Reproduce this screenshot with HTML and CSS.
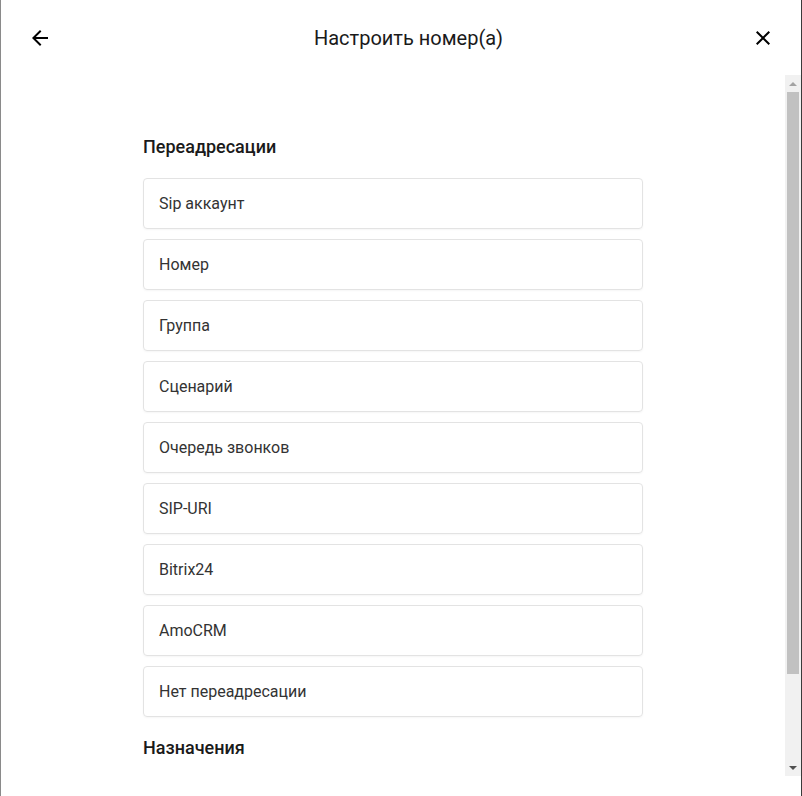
FILE: index.html
```html
<!DOCTYPE html>
<html lang="ru">
<head>
<meta charset="utf-8">
<title>Настроить номер(а)</title>
<link rel="stylesheet" href="styles.css">
</head>
<body>
<div class="modal">
  <header class="modal-header">
    <button class="icon-btn" aria-label="Назад">
      <svg viewBox="0 0 24 24" width="24" height="24"><path d="M20 11H7.830l5.59-5.59L12 4l-8 8 8 8 1.41-1.410L7.830 13H20v-2z"/></svg>
    </button>
    <h1 class="modal-title">Настроить номер(а)</h1>
    <button class="icon-btn" aria-label="Закрыть">
      <svg viewBox="0 0 24 24" width="24" height="24"><path d="M19 6.41L17.59 5 12 10.59 6.41 5 5 6.41 10.59 12 5 17.59 6.41 19 12 13.41 17.59 19 19 17.59 13.41 12z"/></svg>
    </button>
  </header>
  <div class="modal-body">
    <div class="scroll-area">
      <div class="content">
        <h2 class="section-title">Переадресации</h2>
        <ul class="options">
          <li class="option">Sip аккаунт</li>
          <li class="option">Номер</li>
          <li class="option">Группа</li>
          <li class="option">Сценарий</li>
          <li class="option">Очередь звонков</li>
          <li class="option">SIP-URI</li>
          <li class="option">Bitrix24</li>
          <li class="option">AmoCRM</li>
          <li class="option">Нет переадресации</li>
        </ul>
        <h2 class="section-title section-title--second">Назначения</h2>
      </div>
    </div>
    <div class="scrollbar" aria-hidden="true">
      <div class="sb-btn"><span class="tri tri-up"></span></div>
      <div class="sb-track"><div class="sb-thumb"></div></div>
      <div class="sb-btn"><span class="tri tri-down"></span></div>
    </div>
  </div>
</div>
</body>
</html>
```
FILE: styles.css
```css
* { box-sizing: border-box; }
html, body { margin: 0; padding: 0; background: #fff; }
body { font-family: Roboto, "Noto Sans", Arial, sans-serif; color: #212121; }

.modal {
  width: 802px;
  height: 796px;
  display: flex;
  flex-direction: column;
  border-left: 1px solid #8a8a8a;
  border-right: 1px solid #3a3a3a;
  padding-bottom: 20px;
  background: #fff;
  overflow: hidden;
}

.modal-header {
  height: 75px;
  flex: none;
  display: flex;
  align-items: center;
  justify-content: space-between;
  padding: 0 26px 0 27px;
}

.icon-btn {
  width: 24px;
  height: 24px;
  padding: 0;
  border: 0;
  background: none;
  display: flex;
  cursor: pointer;
}
.icon-btn svg { fill: #000; }

.modal-title {
  margin: 0 0 0 14px;
  font-size: 20px;
  font-weight: 400;
  color: #1a1a1a;
  line-height: 28px;
}

.modal-body {
  flex: 1;
  min-height: 0;
  display: flex;
}

.scroll-area {
  flex: 1;
  min-width: 0;
  overflow: hidden;
}

.content {
  width: 500px;
  margin: 0 auto;
  padding: 60px 0 118px;
}

.section-title {
  margin: 0 0 19px;
  font-size: 18px;
  font-weight: 500;
  line-height: 24px;
  color: #1a1a1a;
}
.section-title--second { margin: 19px 0 0; }

.options {
  list-style: none;
  margin: 0;
  padding: 0;
  display: flex;
  flex-direction: column;
  gap: 10px;
}

.option {
  height: 51px;
  display: flex;
  align-items: center;
  padding: 0 15px;
  border: 1px solid #e3e3e3;
  border-radius: 4px;
  box-shadow: 0 1px 2px rgba(0,0,0,0.04);
  font-size: 16px;
  color: #333;
}

.scrollbar {
  width: 16px;
  flex: none;
  display: flex;
  flex-direction: column;
  background: #f1f1f1;
}
.sb-btn {
  height: 17px;
  flex: none;
  display: flex;
  align-items: center;
  justify-content: center;
}
.sb-track {
  flex: 1;
  padding: 0 2px;
}
.sb-thumb {
  height: 582px;
  background: #c1c1c1;
}
.tri {
  width: 0;
  height: 0;
  border-left: 4px solid transparent;
  border-right: 4px solid transparent;
}
.tri-up { border-bottom: 4px solid #a3a3a3; }
.tri-down { border-top: 4px solid #505050; }
```
